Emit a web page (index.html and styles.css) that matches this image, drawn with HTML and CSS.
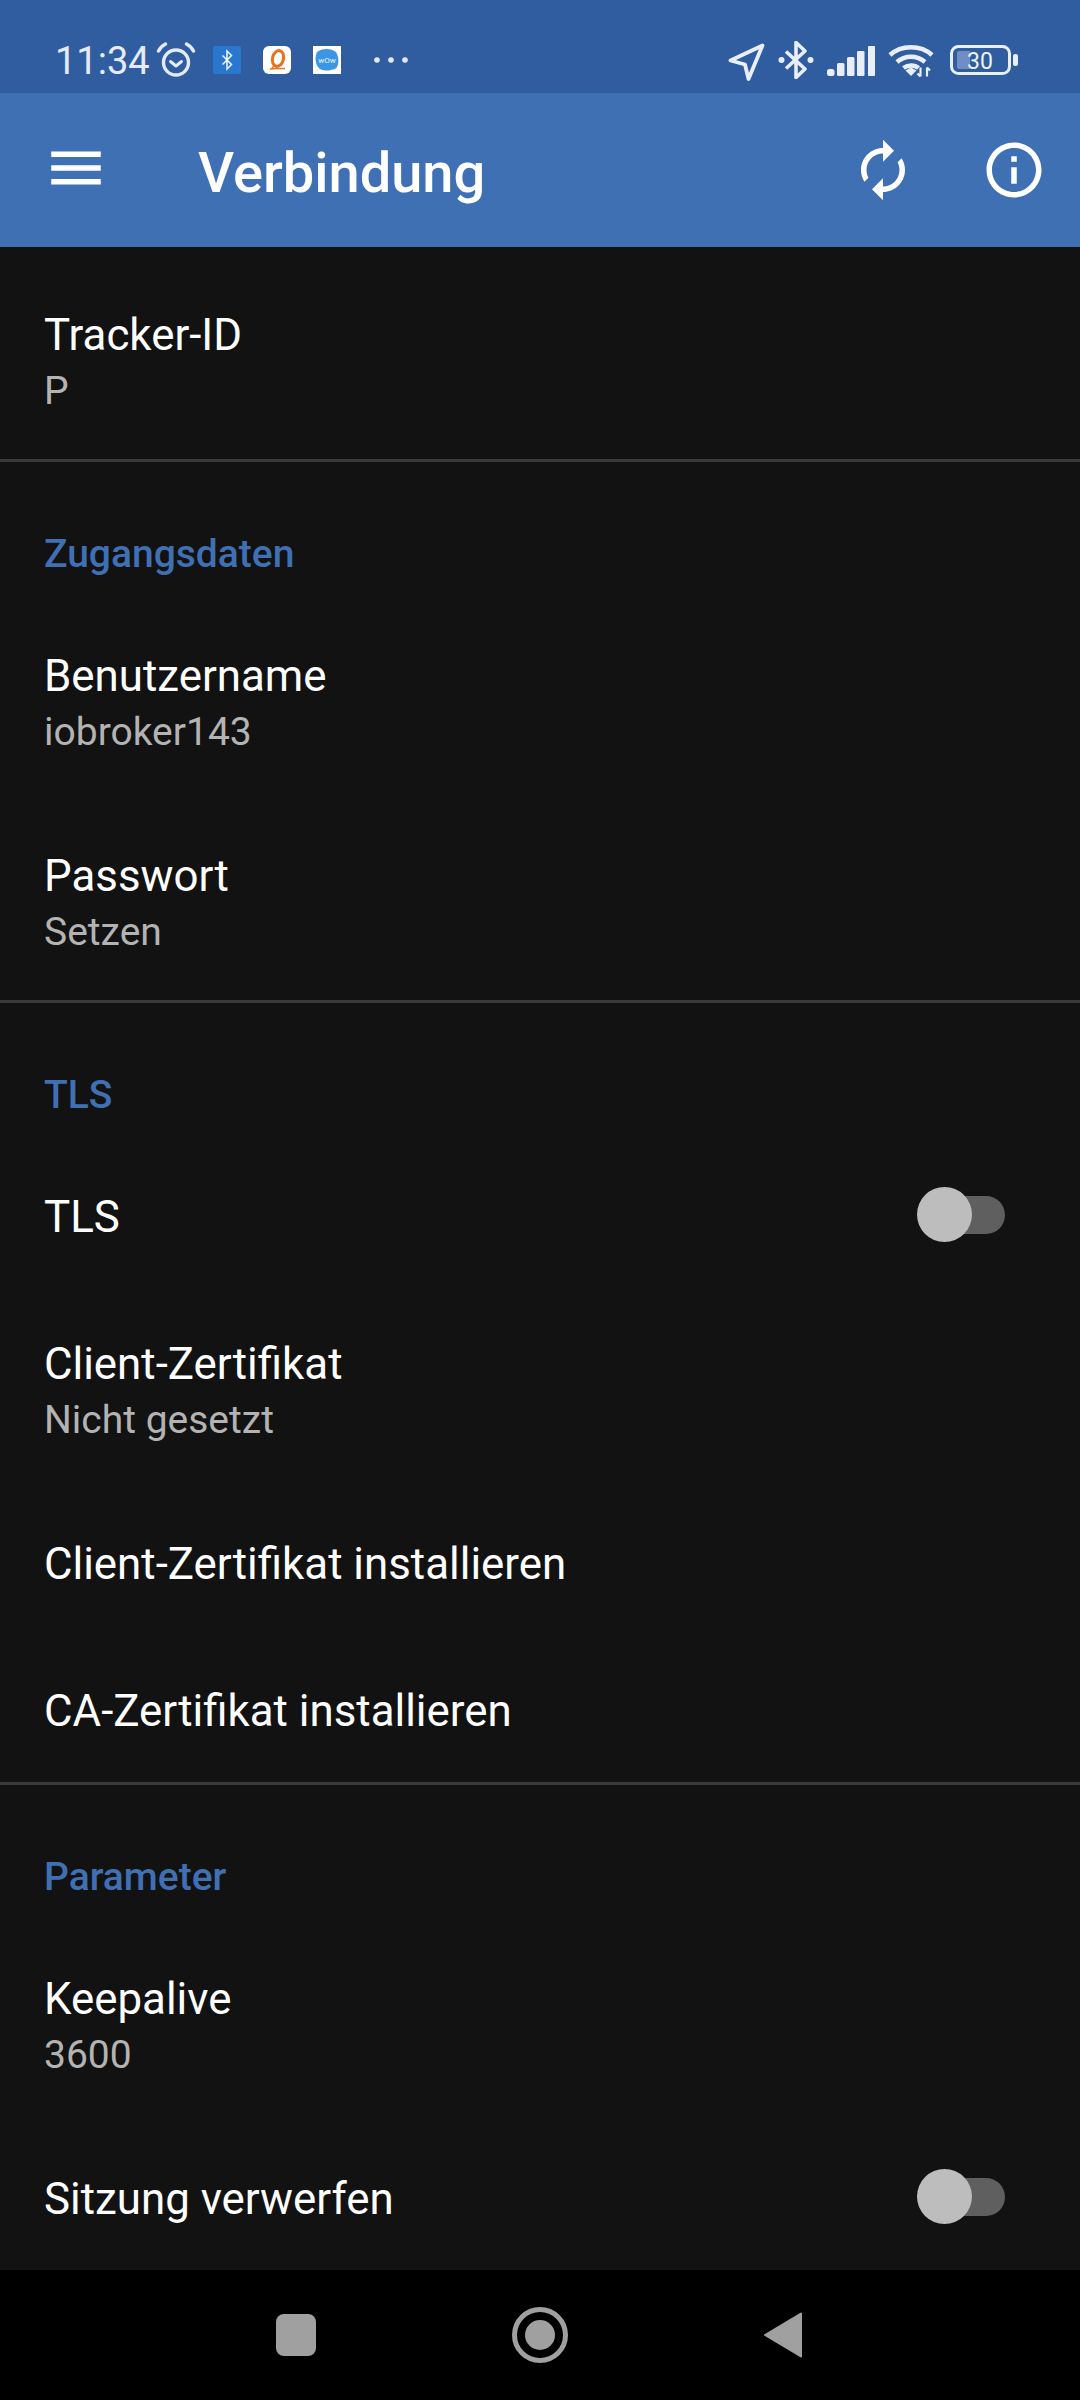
FILE: index.html
```html
<!DOCTYPE html>
<html lang="de">
<head>
<meta charset="utf-8">
<title>Verbindung</title>
<link rel="stylesheet" href="styles.css">
</head>
<body>
<div class="screen">
  <div class="statusbar">
    <span class="clock">11:34</span>
    <svg class="ic-alarm" viewBox="0 0 40 36" fill="none" stroke="#e4ebf6" stroke-linecap="round">
      <circle cx="20" cy="20.500" r="12.500" stroke-width="3.400"/>
      <path d="M14.500 19.500l5.500 4.500 5.500-4.500" stroke-width="3" stroke-linejoin="round"/>
      <path d="M2.500 9C4 6 6.500 3.500 9.500 2M37.500 9C36 6 33.500 3.500 30.500 2" stroke-width="3.400"/>
    </svg>
    <svg class="ic-app ic-bt" viewBox="0 0 28 28">
      <rect width="28" height="28" rx="2" fill="#2a77cf"/>
      <path d="M9.500 9.500l9 9L14 23V5l4.500 4.500-9 9" fill="none" stroke="#f0f6ff" stroke-width="1.500"/>
    </svg>
    <svg class="ic-app ic-q" viewBox="0 0 28 28">
      <rect width="28" height="28" rx="6" fill="#fff"/>
      <ellipse cx="15" cy="12.500" rx="5.500" ry="8" transform="rotate(14 15 12.500)" fill="none" stroke="#e8701f" stroke-width="3"/>
      <path d="M7 23c5-1 10 0 15-.5M9 22l3-3" fill="none" stroke="#e8701f" stroke-width="1.400"/>
    </svg>
    <svg class="ic-app ic-w" viewBox="0 0 28 28">
      <rect width="28" height="28" fill="#fff"/>
      <path d="M4 6c5-4 14-4 19 0 3 5 3 11 1 15-2 3-4 2-6 3-5 1-10 1-13-3C2 17 2 10 4 6z" fill="#3b96e6"/>
      <text class="wow" x="14" y="17">wOw</text>
    </svg>
    <svg class="ic-dots" viewBox="0 0 34 6" fill="#e4ebf6">
      <circle cx="3" cy="3" r="2.800"/><circle cx="17" cy="3" r="2.800"/><circle cx="31" cy="3" r="2.800"/>
    </svg>
    <span class="spacer"></span>
    <svg class="ic-loc" viewBox="0 0 37 38" fill="none" stroke="#e9eff8" stroke-width="3.800" stroke-linejoin="round">
      <path d="M34.500 2.500L2.500 17.500l14.500 4 3.500 14.500z"/>
    </svg>
    <svg class="ic-btm" viewBox="0 0 36 38" fill="none" stroke="#e9eff8" stroke-width="3.600" stroke-linejoin="round">
      <path d="M8 10.500l19 17.500-9 8.500V1.500l9 8.500L8 27.500"/>
      <circle cx="3.500" cy="19" r="3" fill="#e9eff8" stroke="none"/>
      <circle cx="32.500" cy="19" r="3" fill="#e9eff8" stroke="none"/>
    </svg>
    <svg class="ic-signal" viewBox="0 0 48 30" fill="#e9eff8">
      <rect x="0" y="23" width="7.500" height="7" rx="2.500"/>
      <rect x="10" y="17" width="7.500" height="13" rx="1.500"/>
      <rect x="20" y="11" width="7.500" height="19" rx="1.500"/>
      <rect x="30" y="5" width="7.500" height="25" rx="1.200"/>
      <rect x="41" y="0" width="7" height="30" rx="1"/>
    </svg>
    <svg class="ic-wifi" viewBox="0 0 46 33" fill="none" stroke="#e9eff8" stroke-width="4.500">
      <path d="M2 11C13 .5 33 .5 44 11"/>
      <path d="M9 18c8-7 20-7 28 0"/>
      <path d="M15.500 24c4.500-3.500 11-3.500 15 0"/>
      <path d="M17.500 26.500l5.500-3 5.500 3-5.500 5.500z" fill="#e9eff8" stroke="none"/>
      <path d="M32.500 23.500v9M32.500 32.500l-3-3M39 32.500v-9M39 23.500l3 3" stroke-width="2.200"/>
    </svg>
    <svg class="ic-batt" viewBox="0 0 68 30" fill="none">
      <rect x="1.500" y="1.500" width="58" height="27" rx="7" stroke="#e9eff8" stroke-width="3"/>
      <path d="M9 6h11v18H9a2 2 0 0 1-2-2V8a2 2 0 0 1 2-2z" fill="#6f8fc4"/>
      <rect x="63" y="9" width="5" height="12" rx="2" fill="#e9eff8"/>
      <text class="batt-num" x="17" y="24">30</text>
    </svg>
  </div>

  <header class="toolbar">
    <svg class="tb-icon tb-menu" viewBox="0 0 24 24" fill="#fff"><path d="M3 18h18v-2H3v2zm0-5h18v-2H3v2zm0-7v2h18V6H3z"/></svg>
    <h1 class="tb-title">Verbindung</h1>
    <svg class="tb-icon" viewBox="0 0 24 24" fill="#fff"><path d="M12 6v3l4-4-4-4v3c-4.420 0-8 3.580-8 8 0 1.570.46 3.030 1.240 4.260L6.700 14.800c-.45-.83-.7-1.790-.7-2.800 0-3.310 2.690-6 6-6zm6.760 1.740L17.300 9.200c.44.84.7 1.790.7 2.800 0 3.310-2.690 6-6 6v-3l-4 4 4 4v-3c4.420 0 8-3.580 8-8 0-1.570-.46-3.030-1.240-4.260z"/></svg>
    <svg class="tb-icon" viewBox="0 0 24 24" fill="#fff"><path d="M11 7h2v2h-2zm0 4h2v6h-2zm1-9C6.480 2 2 6.480 2 12s4.480 10 10 10 10-4.480 10-10S17.520 2 12 2zm0 18c-4.410 0-8-3.590-8-8s3.590-8 8-8 8 3.590 8 8-3.590 8-8 8z"/></svg>
  </header>

  <main class="list">
    <div class="row row-two"><div class="title">Tracker-ID</div><div class="sub">P</div></div>
    <hr class="divider">
    <div class="category">Zugangsdaten</div>
    <div class="row row-two"><div class="title">Benutzername</div><div class="sub">iobroker143</div></div>
    <div class="row row-two"><div class="title">Passwort</div><div class="sub">Setzen</div></div>
    <hr class="divider">
    <div class="category">TLS</div>
    <div class="row row-one row-switch"><div class="title">TLS</div><span class="switch"><span class="thumb"></span></span></div>
    <div class="row row-two"><div class="title">Client-Zertifikat</div><div class="sub">Nicht gesetzt</div></div>
    <div class="row row-one"><div class="title">Client-Zertifikat installieren</div></div>
    <div class="row row-one"><div class="title">CA-Zertifikat installieren</div></div>
    <hr class="divider">
    <div class="category">Parameter</div>
    <div class="row row-two"><div class="title">Keepalive</div><div class="sub">3600</div></div>
    <div class="row row-one row-switch"><div class="title">Sitzung verwerfen</div><span class="switch"><span class="thumb"></span></span></div>
  </main>

  <nav class="navbar">
    <span class="nav-square"></span>
    <svg class="nav-home" viewBox="0 0 56 56"><circle cx="28" cy="28" r="25.500" fill="none" stroke="#a0a0a0" stroke-width="5"/><circle cx="28" cy="28" r="15" fill="#a0a0a0"/></svg>
    <svg class="nav-back" viewBox="0 0 38 46"><path d="M37 1.500v43L1 23z" fill="#a0a0a0" stroke="#a0a0a0" stroke-width="2" stroke-linejoin="round"/></svg>
  </nav>
</div>
</body>
</html>
```

FILE: styles.css
```css
* { box-sizing: border-box; }
html, body { margin: 0; padding: 0; height: 2400px; background: #121212; overflow: hidden; }
body { font-family: Roboto, "Noto Sans", sans-serif; }
.screen { display: flex; flex-direction: column; width: 1080px; height: 2400px; }

.statusbar { flex: 0 0 93px; display: flex; align-items: center; background: #305da0; padding: 27px 62px 0 55px; }
.clock { color: #e4ebf6; font-size: 38px; line-height: 40px; margin-top: 1px; width: 101px; }
.ic-alarm { width: 40px; height: 36px; margin-top: -1px; }
.ic-app { width: 28px; height: 28px; }
.ic-bt { margin-left: 17px; }
.ic-q, .ic-w { margin-left: 22px; }
.wow { font-family: Roboto, sans-serif; font-size: 8px; fill: #eaf5ff; text-anchor: middle; }
.ic-dots { width: 34px; height: 6px; margin-left: 33px; }
.spacer { flex: 1; }
.ic-loc { width: 37px; height: 38px; margin-top: 3px; }
.ic-btm { width: 36px; height: 38px; margin-left: 13px; }
.ic-signal { width: 48px; height: 30px; margin-left: 13px; margin-top: 2px; }
.ic-wifi { width: 46px; height: 33px; margin-left: 13px; margin-top: 1px; }
.ic-batt { width: 68px; height: 30px; margin-left: 16px; }
.batt-num { font-family: Roboto, sans-serif; font-size: 23px; fill: #eef3fa; }

.toolbar { flex: 0 0 154px; display: flex; align-items: center; background: #4070b4; padding: 0 33px 0 43px; }
.tb-icon { width: 66px; height: 66px; flex: none; }
.tb-menu { margin-top: -4px; }
.tb-icon + .tb-icon { margin-left: 65px; }
.tb-title { flex: 1; margin: 6px 0 0 89px; color: #fff; font-size: 56px; font-weight: 500; line-height: 60px; }

.list { flex: 1; min-height: 0; overflow: hidden; padding-top: 15px; }
.row { display: flex; flex-direction: column; justify-content: center; padding: 0 44px; }
.row-two { height: 200px; padding-top: 2px; }
.row-one { height: 147px; padding-bottom: 2px; }
.row-switch { flex-direction: row; align-items: center; justify-content: space-between; padding-right: 75px; }
.title { color: #fff; font-size: 43.850px; line-height: 56px; }
.sub { color: #b3b3b3; font-size: 39px; line-height: 56px; }
.divider { height: 3px; margin: -3px 0 0; border: 0; background: #3a3a3a; }
.category { height: 141px; padding: 64px 44px 0; color: #4070b4; font-size: 39px; font-weight: 500; line-height: 56px; }

.switch { position: relative; display: block; width: 76px; height: 38px; margin-top: -4px; border-radius: 19px; background: #5f5f5f; }
.thumb { position: absolute; left: -12px; top: -8.500px; width: 55px; height: 55px; border-radius: 50%; background: #bdbdbd; }

.navbar { flex: 0 0 130px; background: #000; display: flex; align-items: center; padding: 0 278px 0 276px; justify-content: space-between; }
.nav-square { width: 40px; height: 42px; border-radius: 8px; background: #a0a0a0; }
.nav-home { width: 56px; height: 56px; }
.nav-back { width: 38px; height: 46px; }
```
